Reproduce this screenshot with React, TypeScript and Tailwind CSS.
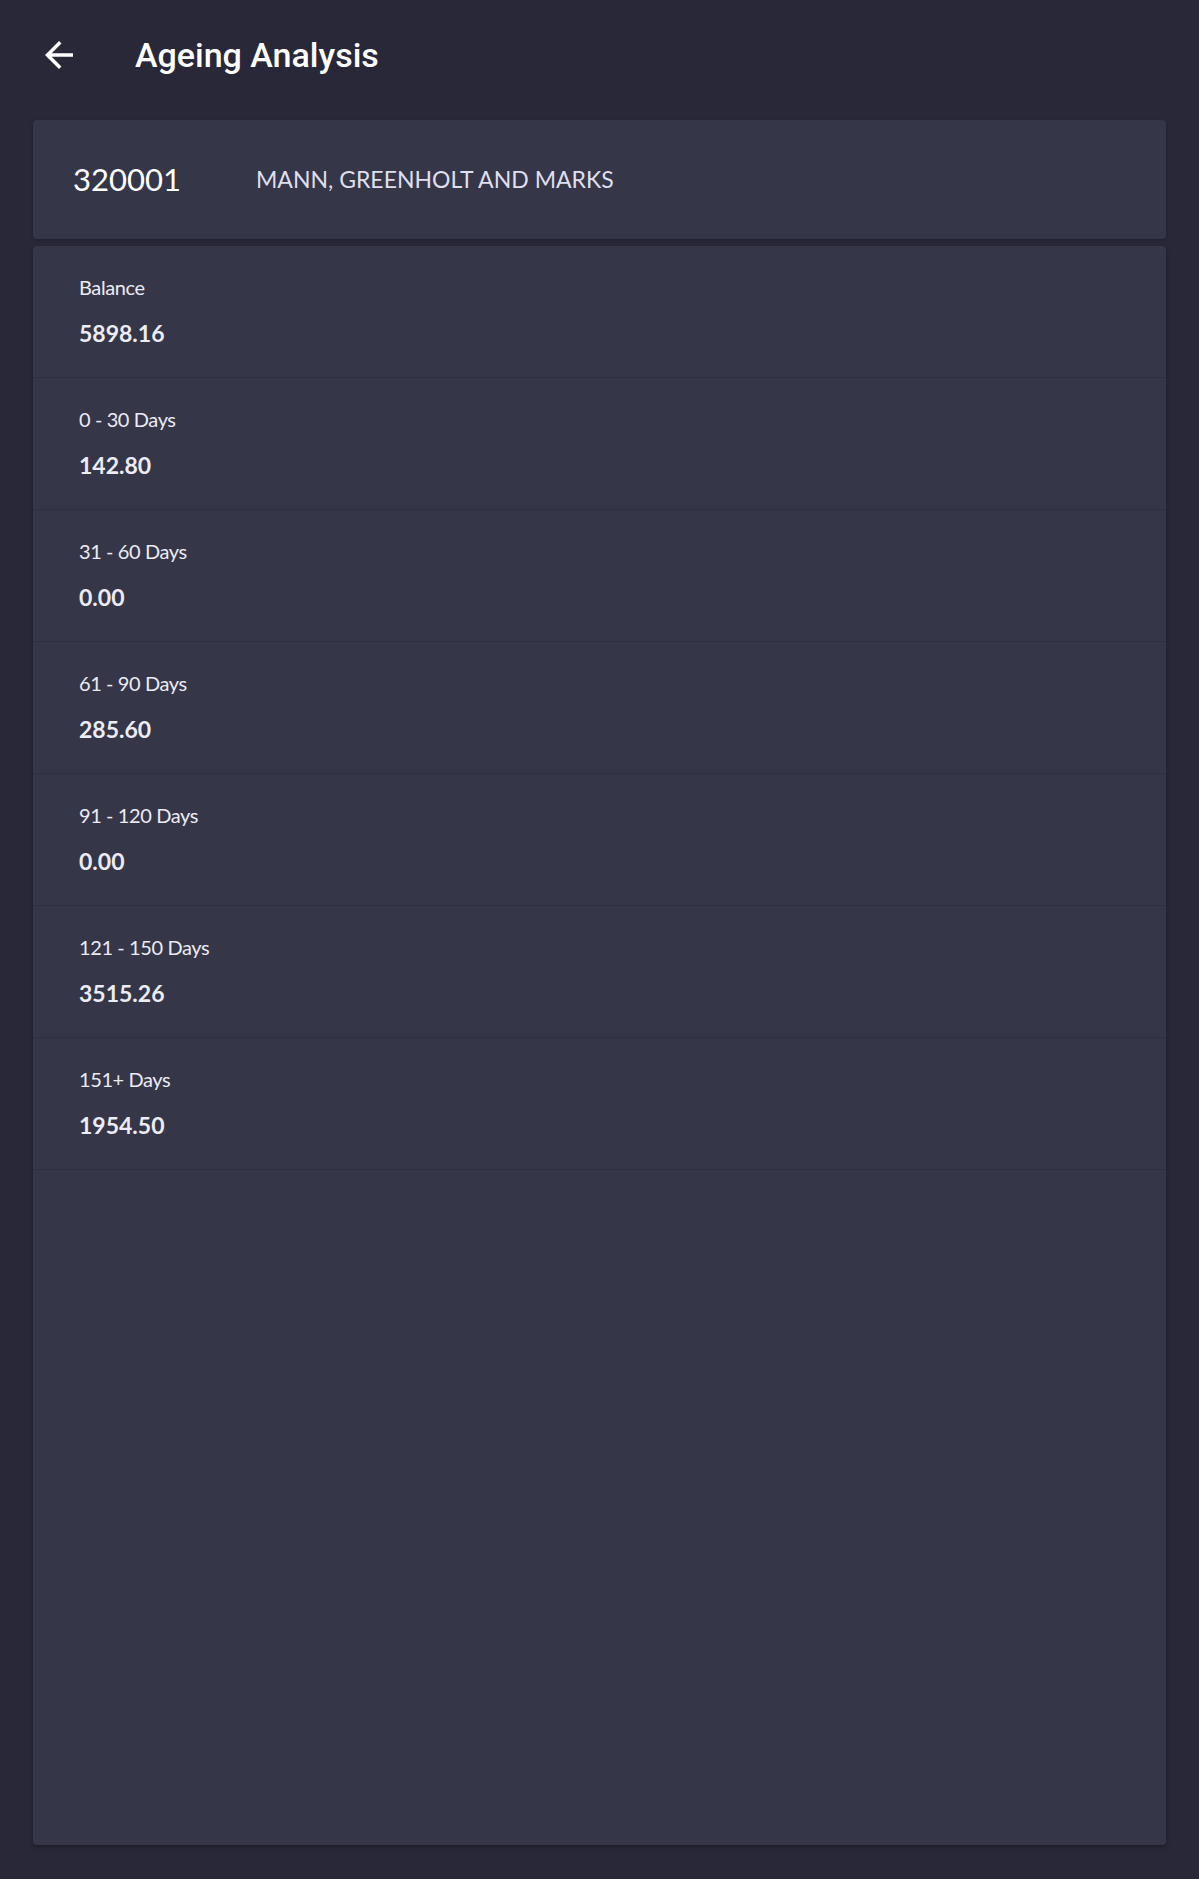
// Ageing Analysis screen: a customer header card followed by the
// balance + ageing buckets list. Dark slate palette throughout.

const BUCKETS: { label: string; value: string }[] = [
  { label: "Balance", value: "5898.16" },
  { label: "0 - 30 Days", value: "142.80" },
  { label: "31 - 60 Days", value: "0.00" },
  { label: "61 - 90 Days", value: "285.60" },
  { label: "91 - 120 Days", value: "0.00" },
  { label: "121 - 150 Days", value: "3515.26" },
  { label: "151+ Days", value: "1954.50" },
];

function BackArrow() {
  return (
    <svg width="42" height="42" viewBox="0 0 24 24" fill="#ffffff" aria-hidden="true">
      <path d="M20 11H7.83l5.59-5.59L12 4l-8 8 8 8 1.41-1.41L7.83 13H20v-2z" />
    </svg>
  );
}

export default function App() {
  return (
    <div className="flex min-h-[1879px] w-full flex-col bg-[#292838] font-['Lato',sans-serif]">
      {/* top bar */}
      <header className="flex h-[110px] shrink-0 items-center">
        <button type="button" aria-label="Back" className="ml-[38px] flex h-[42px] w-[42px] items-center justify-center">
          <BackArrow />
        </button>
        <h1 className="ml-[55px] font-['Roboto',sans-serif] text-[34px] font-medium text-white">
          Ageing Analysis
        </h1>
      </header>

      <main className="flex flex-1 flex-col gap-[7px] px-[33px] pt-[10px] pb-[34px]">
        {/* customer */}
        <section className="flex h-[119px] items-center rounded-[4px] bg-[#363649] pl-[40px] shadow-[0_1px_3px_rgba(0,0,0,0.25)]">
          <span className="w-[183px] text-[31px] leading-none text-white">320001</span>
          <span className="text-[23px] leading-none text-[#dfdfee]">MANN, GREENHOLT AND MARKS</span>
        </section>

        {/* buckets */}
        <section className="flex flex-1 flex-col rounded-[4px] bg-[#363649] shadow-[0_2px_4px_rgba(0,0,0,0.3)]">
          {BUCKETS.map((b) => (
            <div
              key={b.label}
              className="flex h-[132px] flex-col border-b border-[#2f2f41] pl-[46px] pt-[28px]"
            >
              <span className="text-[20px] leading-[26px] tracking-[-0.4px] text-[#ebebf3]">{b.label}</span>
              <span className="mt-[19px] text-[23px] font-bold leading-[28px] text-[#ececf5]">{b.value}</span>
            </div>
          ))}
        </section>
      </main>
    </div>
  );
}
